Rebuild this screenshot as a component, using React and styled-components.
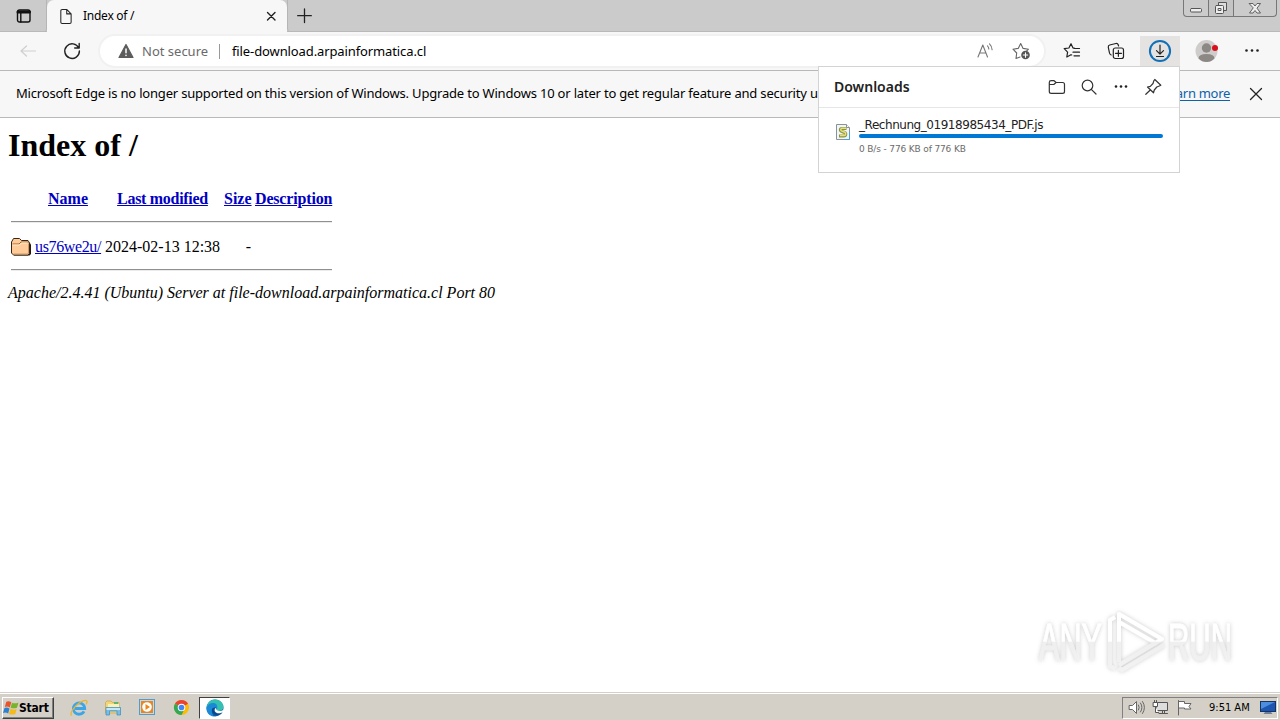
import React from "react";
import styled, { createGlobalStyle } from "styled-components";

const GlobalStyle = createGlobalStyle`
  * {
    box-sizing: border-box;
  }
  body {
    margin: 0;
    overflow: hidden;
    background: #fff;
  }
  svg {
    display: block;
    flex: none;
    overflow: visible;
  }
`;

const Desktop = styled.div`
  position: relative;
  display: flex;
  flex-direction: column;
  width: 1280px;
  height: 720px;
  background: #fff;
  color: #000;
  font-family: "Noto Sans", "Open Sans", sans-serif;
  font-size: 12px;
  white-space: nowrap;
`;

const TitleBar = styled.div`
  display: flex;
  height: 32px;
  background: #cbcbcb;
  box-shadow: inset 0 -1px 0 #b9b9b9;
`;

const TabActions = styled.div`
  display: flex;
  align-items: center;
  justify-content: center;
  width: 47px;
  padding-left: 2px;
  border-right: 1px solid #b5b5b5;
  border-bottom-right-radius: 4px;
`;

const Tab = styled.div`
  display: flex;
  align-items: center;
  width: 240px;
  height: 32px;
  padding: 0 9px 0 11px;
  background: #f7f7f7;
  border-radius: 7px 7px 0 0;
`;

const TabTitle = styled.span`
  flex: 1;
  margin-left: 10px;
  font-size: 12px;
  line-height: 16px;
  padding-bottom: 1px;
  letter-spacing: -0.25px;
`;

const NewTab = styled.div`
  display: flex;
  align-items: center;
  justify-content: center;
  width: 35px;
  border-left: 1px solid #b5b5b5;
  border-bottom-left-radius: 4px;
`;

const WindowButtons = styled.div`
  display: flex;
  width: 94px;
  height: 17px;
  margin-left: auto;
  margin-right: 3px;
  border: 1px solid #777;
  border-top: 0;
  border-radius: 0 0 4px 4px;
`;

const WindowButton = styled.div`
  display: flex;
  align-items: center;
  justify-content: center;
  width: ${(props) => props.$width}px;
  background: ${(props) => (props.$active ? "#c4c4c4" : "transparent")};
  & + & {
    border-left: 1px solid #777;
  }
`;

const Toolbar = styled.div`
  display: flex;
  align-items: center;
  gap: 4px;
  height: 39px;
  padding: 0 0 0 8px;
  background: #f7f7f7;
  border-bottom: 1px solid #b9b9b9;
`;

const ToolButton = styled.div`
  display: flex;
  flex: none;
  align-items: center;
  justify-content: center;
  width: 40px;
  height: 30px;
  margin-left: ${(props) => props.$gap || 0}px;
  background: ${(props) => (props.$active ? "#e5e3e1" : "transparent")};
`;

const AddressBar = styled.div`
  display: flex;
  flex: none;
  align-items: center;
  width: 944px;
  height: 30px;
  margin: 0 4px;
  padding: 0 14px 0 17px;
  background: #fff;
  border-radius: 15px;
  box-shadow: 0 0 0 2px #f1f1f1;
`;

const Security = styled.span`
  width: 78px;
  height: 15px;
  margin-left: 7px;
  border-right: 1px solid #999;
  color: #6a6a6a;
  font-size: 13px;
  line-height: 15px;
`;

const Url = styled.span`
  flex: 1;
  margin-left: 12px;
  font-size: 13px;
  letter-spacing: -0.11px;
`;

const AddressActions = styled.div`
  display: flex;
  gap: 18px;
`;

const InfoBar = styled.div`
  display: flex;
  align-items: center;
  height: 47px;
  padding: 0 17px 0 16px;
  background: #f7f7f7;
  border-bottom: 1px solid #b9b9b9;
  font-size: 13px;
  letter-spacing: -0.19px;
`;

const InfoText = styled.span`
  flex: 1;
  width: 0;
  padding-bottom: 2px;
  overflow: hidden;
`;

const InfoLink = styled.a`
  margin-right: 19px;
  padding-bottom: 2px;
  color: #0d62a8;
  text-decoration: underline;
  text-underline-offset: 2px;
  letter-spacing: -0.3px;
`;

const Page = styled.div`
  position: relative;
  flex: 1;
  padding: 8px;
  font-family: "Liberation Serif", "Times New Roman", serif;
  font-size: 16px;
  line-height: 18px;
`;

const Heading = styled.h1`
  margin: 0 0 19px;
  font-size: 32px;
  line-height: 39px;
`;

const Listing = styled.table`
  width: 327px;
  table-layout: fixed;
  border-spacing: 2px;
`;

const Row = styled.tr`
  height: 24px;
`;

const Head = styled.th`
  width: ${(props) => props.$width}px;
  padding: 2px 1px 1px;
  letter-spacing: ${(props) => props.$spacing || 0}px;
`;

const Cell = styled.td`
  padding: ${(props) => props.$top || 1}px 1px 1px;
  text-align: ${(props) => props.$align || "left"};
  letter-spacing: ${(props) => props.$spacing || 0}px;
`;

const Rule = styled.hr`
  margin: 8px 0;
  height: 2px;
  border: 0;
  border-top: 1px solid #8f8f8f;
  border-bottom: 1px solid #ececec;
`;

const Link = styled.a`
  color: #0000c4;
  text-decoration: underline;
`;

const Address = styled.address`
  margin-top: 2px;
`;

const Watermark = styled.div`
  position: absolute;
  right: 40px;
  bottom: 14px;
`;

const Popover = styled.div`
  position: absolute;
  top: 66px;
  left: 818px;
  width: 362px;
  height: 107px;
  background: #fff;
  border: 1px solid #d3d3d3;
  font-family: "DejaVu Sans", Tahoma, sans-serif;
`;

const PopoverHeader = styled.div`
  display: flex;
  align-items: center;
  gap: 14px;
  height: 41px;
  padding: 0 17px 0 15px;
  border-bottom: 1px solid #e6e6e6;
`;

const PopoverTitle = styled.span`
  flex: 1;
  padding-bottom: 2px;
  color: #222;
  font-family: "Noto Sans", sans-serif;
  font-size: 14px;
  font-weight: 600;
`;

const Download = styled.div`
  display: flex;
  gap: 8px;
  padding: 9px 16px 0;
`;

const FileIcon = styled.div`
  padding-top: 7px;
`;

const DownloadInfo = styled.div`
  flex: 1;
`;

const FileName = styled.div`
  height: 17px;
  color: #222;
  font-size: 12px;
  line-height: 17px;
  letter-spacing: -0.45px;
`;

const Progress = styled.div`
  height: 4px;
  background: #0078d4;
  border-radius: 2px;
`;

const DownloadStatus = styled.div`
  margin-top: 3px;
  color: #6b6b6b;
  font-size: 9px;
  line-height: 16px;
  letter-spacing: -0.14px;
`;

const Taskbar = styled.div`
  display: flex;
  align-items: center;
  height: 28px;
  padding: 2px 2px 0;
  background: #d4d0c8;
  border-top: 1px solid #d4d0c8;
  box-shadow: inset 0 1px 0 #fff;
  font-family: "DejaVu Sans Condensed", "DejaVu Sans", Tahoma, sans-serif;
`;

const StartButton = styled.div`
  display: flex;
  align-items: center;
  width: 52px;
  height: 22px;
  margin-right: 8px;
  border: 1px solid;
  border-color: #fff #404040 #404040 #fff;
  box-shadow: inset -1px -1px 0 #808080;
  font-size: 12px;
  font-weight: bold;
  letter-spacing: -0.2px;
`;

const Pinned = styled.div`
  display: flex;
  align-items: center;
  justify-content: center;
  width: ${(props) => (props.$active ? 31 : 34)}px;
  height: 22px;
  margin-left: ${(props) => (props.$active ? 1 : 0)}px;
  background: ${(props) => (props.$active ? "#fff" : "transparent")};
  border: ${(props) => (props.$active ? "1px solid" : "0")};
  border-color: #404040 #fff #fff #404040;
`;

const Tray = styled.div`
  display: flex;
  align-items: center;
  width: 156px;
  height: 22px;
  margin-left: auto;
  padding: 0 1px 0 5px;
  border: 1px solid;
  border-color: #808080 #fff #fff #808080;
`;

const TrayIcons = styled.div`
  display: flex;
  gap: 7px;
`;

const Clock = styled.span`
  flex: 1;
  padding-left: 16px;
  font-size: 11px;
`;

const Icon = ({ size = 18, box, color = "#222", width = 1.2, children }) => (
  <svg
    width={size}
    height={size}
    viewBox={box || `0 0 ${size} ${size}`}
    fill="none"
    stroke={color}
    strokeWidth={width}
    strokeLinejoin="round"
    strokeLinecap="round"
  >
    {children}
  </svg>
);

const Dots = ({ gap = 5 }) => (
  <Icon>
    <g fill="#222" stroke="none">
      <circle cx={9 - gap} cy="8.500" r="1.300" />
      <circle cx="9" cy="8.500" r="1.300" />
      <circle cx={9 + gap} cy="8.500" r="1.300" />
    </g>
  </Icon>
);

const FolderIcon = () => (
  <svg width="20" height="22" viewBox="0 -1.500 20 22">
    <path d="M2.500 19h16l1.500-1.500V8l-1.500-2z" fill="#221a12" />
    <path d="M.5 5.500 2.500 2h6l2 2h6.500L18.500 6.500V17L17 18.500H2.500L.5 16.500z" fill="#ffcc99" stroke="#3a2615" />
    <path d="M1.500 7.500h6.500l2-2h8" fill="none" stroke="#996633" />
    <path d="M2.500 17.500h14.500l.5-1V7" fill="none" stroke="#cc9966" />
    <path d="M1.500 8.500h7l2-2h6" fill="none" stroke="#ffe8cc" />
  </svg>
);

const AnyRunLogo = () => (
  <svg width="204" height="72" viewBox="0 0 204 72">
    <defs>
      <filter id="glow" x="-10%" y="-10%" width="120%" height="120%">
        <feDropShadow dx="0" dy="0" stdDeviation="1.9" floodColor="#777" floodOpacity="0.4" />
      </filter>
      <linearGradient id="fade" x1="0" y1="0" x2="0" y2="72" gradientUnits="userSpaceOnUse">
        <stop offset="0.49" stopColor="#fff" />
        <stop offset="0.5" stopColor="#efefef" />
        <stop offset="1" stopColor="#f3f3f3" />
      </linearGradient>
    </defs>
    <g filter="url(#glow)" fill="url(#fade)" fontFamily="Liberation Sans, sans-serif" fontSize="51">
      <g stroke="url(#fade)" strokeWidth="0.9">
        <text x="3" y="54" textLength="63" lengthAdjust="spacingAndGlyphs">ANY</text>
        <text x="132" y="54" textLength="64" lengthAdjust="spacingAndGlyphs">RUN</text>
      </g>
      <path
        d="M83 56V8l43 25-43 26M83 16l38 22M79 11l-5 3v46l5 3M83 62l3 2 42-25"
        fill="none"
        stroke="url(#fade)"
        strokeWidth="4"
        strokeLinejoin="round"
      />
    </g>
  </svg>
);

const EdgeIcon = () => (
  <svg width="18" height="18" viewBox="0 0 18 18">
    <circle cx="9" cy="9" r="8.500" fill="#0c59a4" />
    <path d="M.5 9C1 3.500 4.500.5 9 .5c5 0 8.500 3.500 8.500 7.500 0 3-3 4.500-6 4-1.500-.3-1-1-.5-2 .5-2-1-4-4-4S1.500 7.500.5 9z" fill="#35c1b1" />
    <path d="M.5 9C1.500 5 5 3.500 8 4c2.500.5 4 3 3 6-1-2-2.500-2-4-1-2 1.500-1.500 5 1 8.500C3 17 .3 13.500.5 9z" fill="#1b8ad6" />
    <path d="M8 9c-1.500 2 0 5 3 5.500 2 .4 4-.2 5.500-1.500l-1.500 2c-4 2-9 0-9-4 0-1.200 1-2 2-2z" fill="#0a4283" />
    <path d="M9.500 9c1.500.5.5 1.500 1.500 2.300 1.500 1.200 4.500 1 6.500-.8l-.6 2.300c-2.400 2-5.800 2-7.500.2-1-1.200-.9-3 .1-4z" fill="#fff" />
  </svg>
);

const ChromeIcon = () => (
  <svg width="17" height="17" viewBox="0 0 18 18">
    <circle cx="9" cy="9" r="8" fill="#fbbc05" />
    <path d="M9 9 2.070 5A8 8 0 0 1 15.930 5z" fill="#ea4335" />
    <path d="M9 9 2.070 5A8 8 0 0 0 9 17l3-6z" fill="#34a853" />
    <circle cx="9" cy="9" r="4" fill="#fff" />
    <circle cx="9" cy="9" r="3" fill="#4285f4" />
  </svg>
);

const ExplorerIcon = () => (
  <svg width="18" height="18" viewBox="0 0 18 18">
    <path d="M1.500 3.500 3 2h4l1.500 1.500H15V14H1.500z" fill="#f2d675" stroke="#c7a548" strokeWidth=".7" />
    <path d="M4 5h11v7H4z" fill="#fbf0b5" />
    <path d="M10 3h4v2h-4z" fill="#63b46b" />
    <path d="M2 8.500h14.500v7.500h-3.500v-4H5.500v4H2z" fill="#79bce6" stroke="#3b8cc0" strokeWidth=".7" />
    <path d="M2.500 9h13.500v2H2.500z" fill="#c6e7f6" />
  </svg>
);

const IeIcon = () => (
  <svg width="18" height="18" viewBox="0 0 18 18" fill="none">
    <path d="M14 12.300A5.700 5.700 0 1 1 14.700 9.500H5" stroke="#3ba5e8" strokeWidth="2.800" />
    <path d="M1.500 16.500c-2-2 2-8 7-12 4-3 8-4 8.500-2 .2.800-.3 2-1 3" stroke="#e9b530" strokeWidth="1.300" />
  </svg>
);

const PlayerIcon = () => (
  <svg width="17" height="17" viewBox="0 0 17 17">
    <rect x=".5" y=".5" width="15" height="15" fill="#b9ddf2" stroke="#559bc9" />
    <rect x="2" y="2" width="12" height="12" fill="#f08418" />
    <circle cx="8" cy="8" r="4.800" fill="#fff" />
    <path d="m6.500 5 4.500 3-4.500 3z" fill="#f08418" />
  </svg>
);

const WindowsFlag = () => (
  <svg width="16" height="16" viewBox="0 0 16 16">
    <path d="M3.300 1.800q2.500-1.300 5 .5L6.800 7.500q-2.500-1.700-5-.5z" fill="#e8542c" />
    <path d="M9 2.700q3 1.300 6.500-.3L14 7.700q-3.300 1.200-6.400 0z" fill="#76b52b" />
    <path d="M1.500 8q2.500-1 5 .5L5.200 13.500q-2.700-1.500-5.200-.5z" fill="#2d82d0" />
    <path d="M7.400 8.800q3.200 1.300 6.300.1L12.300 14q-3.300 1.200-6.300-.1z" fill="#f4b91b" />
  </svg>
);

const ScriptIcon = () => (
  <svg width="16" height="16" viewBox="0 0 16 16" fill="none">
    <path d="M1.500.5h10l3 3v12h-13z" fill="#f2f5f8" stroke="#8a9299" />
    <path d="M11.500.5v3h3" fill="#fff" stroke="#8a9299" />
    <path d="M14.500 8v7.500H9" stroke="#4d9fd6" />
    <path d="M11.500 4.500H7C4.800 4.500 4.800 7 7 7.500l2.500 1c2 .7 1.500 3.500-.5 3.500H4" stroke="#8a9440" strokeWidth="3" />
    <path d="M11 4.300H7C5 5 5.500 7 7.300 7.300l2.500 1c1.500.7 1 3-.5 3.200H5" stroke="#e5e07c" strokeWidth="1.500" />
  </svg>
);

const Tabs = () => (
  <TitleBar>
    <TabActions>
      <Icon size={16} width={1.4} color="#111">
        <rect x="1.500" y="2" width="12.500" height="12" rx="2" />
        <path d="M2 4h11.500" strokeWidth="3" />
        <path d="M4.800 5v9" />
      </Icon>
    </TabActions>
    <Tab>
      <Icon size={15} width={1.1} box="0 0 15 16">
        <path d="M3.900.6h5.100l4.500 4.500V14q0 1.400-1.400 1.400H3.900Q2.500 15.400 2.500 14V2Q2.500.6 3.900.6zM8.800.6v4.600h4.700" />
      </Icon>
      <TabTitle>Index of /</TabTitle>
      <Icon size={14} width={1.4}>
        <path d="m3.500 3.500 7.500 7.500M11 3.500 3.500 11" />
      </Icon>
    </Tab>
    <NewTab>
      <Icon size={16} width={1.3}>
        <path d="M7.500 1v13.500M.7 7.700h13.600" />
      </Icon>
    </NewTab>
    <WindowButtons>
      <WindowButton $width={24}>
        <Icon size={14} color="#555" width={1}>
          <rect x="1.500" y="7.500" width="11" height="3.500" rx="1" fill="#eee" />
        </Icon>
      </WindowButton>
      <WindowButton $width={25} $active>
        <Icon size={14} color="#555" width={1}>
          <path d="M4.500 4V1.500h8v8H10" fill="#ddd" />
          <rect x="1.500" y="4.500" width="8" height="8" rx="1" fill="#eee" />
          <rect x="4.500" y="7.500" width="2.500" height="2" />
        </Icon>
      </WindowButton>
      <WindowButton $width={43}>
        <Icon size={14} color="#555" width={0.9}>
          <path d="M1.500 2.500H5l2 2.500 2-2.500h3.500L9 7.200l3.500 4.800H9L7 9.500 5 12H1.500L5 7.200z" fill="#eee" />
        </Icon>
      </WindowButton>
    </WindowButtons>
  </TitleBar>
);

const NavBar = () => (
  <Toolbar>
    <ToolButton>
      <Icon color="#cfcfcf">
        <path d="M16.500 9H2M7.500 4 2 9l5.500 5" />
      </Icon>
    </ToolButton>
    <ToolButton>
      <Icon width={1.4}>
        <path d="M15.700 6A7.300 7.300 0 1 0 16.400 9M16.200 1.500V6h-4.500" />
      </Icon>
    </ToolButton>
    <AddressBar>
      <Icon size={18}>
        <path d="M9 2.500 16 15.500H2z" fill="#5c5c5c" stroke="#5c5c5c" />
        <path d="M9 7v3.800M9 13.200v.2" stroke="#fff" strokeWidth="1.500" />
      </Icon>
      <Security>Not secure</Security>
      <Url>file-download.arpainformatica.cl</Url>
      <AddressActions>
        <Icon color="#777" width={1.1}>
          <path d="M2 15 6.800 3l4.700 12M3.800 11h6M11.500 3.800q1.300 1.300 1.300 3.200M13.500 1.800q2.600 2.500 2.600 6" />
        </Icon>
        <Icon color="#666" width={1.1}>
          <path d="M8 15l-4 1.500.7-5.500L1 7.200l5.200-.8L8.700 1.500l2.400 4.900 5.400.8-2 2" />
          <circle cx="13.500" cy="13" r="4.300" fill="#555" stroke="none" />
          <path d="M13.500 10.800v4.400M11.300 13h4.400" stroke="#fff" />
        </Icon>
      </AddressActions>
    </AddressBar>
    <ToolButton>
      <Icon>
        <path d="M11.300 6.200 10 6 8 1.700 5.900 6l-4.700.7 3.400 3.400-.8 4.900 4.200-2.300.7.3M11 6.500h5.500M10 10.200h6.500M11 13.800h5.500" />
      </Icon>
    </ToolButton>
    <ToolButton>
      <Icon>
        <path d="M4.200 13Q2.800 12.500 2.500 11L1.300 5.300Q1 3.500 2.700 3l6.200-1.500q1.700-.3 2.300 1.300l.4 1.200" />
        <rect x="6.300" y="6" width="10.200" height="10.500" rx="2" />
        <path d="M11.400 8.300v6M8.500 11.300h6" />
      </Icon>
    </ToolButton>
    <ToolButton $active>
      <Icon size={24} width={1.2}>
        <circle cx="12" cy="12" r="10.100" stroke="#1170b8" strokeWidth="2" />
        <path d="M12 6v9M8.500 11.700 12 15.200l3.500-3.500M8.500 17.500h7" />
      </Icon>
    </ToolButton>
    <ToolButton $gap={3}>
      <Icon size={24}>
        <g stroke="none">
          <circle cx="11.500" cy="12" r="11" fill="#cfcdcb" />
          <circle cx="11.500" cy="9" r="4.700" fill="#8c8884" />
          <path d="M3.500 19.500q0-4.500 8-4.500t8 4.500Q16 23 11.500 23t-8-3.500z" fill="#8c8884" />
          <circle cx="20" cy="9" r="3" fill="#d90f1e" />
        </g>
      </Icon>
    </ToolButton>
    <ToolButton $gap={1}>
      <Dots gap={5.5} />
    </ToolButton>
  </Toolbar>
);

const DownloadsPopover = () => (
  <Popover>
    <PopoverHeader>
      <PopoverTitle>Downloads</PopoverTitle>
      <Icon color="#333">
        <path d="M1.300 4.500q0-1.800 1.800-1.800h3l2 1.800h6.500q1.900 0 1.900 1.900v7q0 1.900-1.900 1.900H3.200q-1.900 0-1.900-1.900zM1.300 6.500h4.500l2.300-2" />
      </Icon>
      <Icon color="#333">
        <circle cx="7.500" cy="7.500" r="5.300" />
        <path d="m11.300 11.300 4.700 4.700" />
      </Icon>
      <Dots />
      <Icon color="#333">
        <path d="m10.800 1.500 6 5.800-1.500.7-2.500 1-2.500 3-.8 2.800L3.500 9l2.800-.7L9 5.500l.8-2.600zM6.300 12l-4.500 4.300" />
      </Icon>
    </PopoverHeader>
    <Download>
      <FileIcon>
        <ScriptIcon />
      </FileIcon>
      <DownloadInfo>
        <FileName>_Rechnung_01918985434_PDF.js</FileName>
        <Progress />
        <DownloadStatus>0 B/s - 776 KB of 776 KB</DownloadStatus>
      </DownloadInfo>
    </Download>
  </Popover>
);

const IndexPage = () => (
  <Page>
    <Heading>Index of /</Heading>
    <Listing>
      <thead>
        <Row>
          <Head $width={22} />
          <Head $width={68}>
            <Link>Name</Link>
          </Head>
          <Head $width={117} $spacing={-0.3}>
            <Link>Last modified</Link>
          </Head>
          <Head $width={29}>
            <Link>Size</Link>
          </Head>
          <Head $width={79} $spacing={-0.17}>
            <Link>Description</Link>
          </Head>
        </Row>
      </thead>
      <tbody>
        <tr>
          <Cell colSpan={5}>
            <Rule />
          </Cell>
        </tr>
        <Row>
          <Cell>
            <FolderIcon />
          </Cell>
          <Cell $top={2} $spacing={-0.36}>
            <Link>us76we2u/</Link>
          </Cell>
          <Cell $top={2}>2024-02-13 12:38</Cell>
          <Cell $top={2} $align="right">
            -
          </Cell>
          <Cell />
        </Row>
        <tr>
          <Cell colSpan={5}>
            <Rule />
          </Cell>
        </tr>
      </tbody>
    </Listing>
    <Address>Apache/2.4.41 (Ubuntu) Server at file-download.arpainformatica.cl Port 80</Address>
    <Watermark>
      <AnyRunLogo />
    </Watermark>
  </Page>
);

const pinned = [IeIcon, ExplorerIcon, PlayerIcon, ChromeIcon];

const BottomBar = () => (
  <Taskbar>
    <StartButton>
      <WindowsFlag />
      Start
    </StartButton>
    {pinned.map((PinnedIcon, idx) => (
      <Pinned key={idx}>
        <PinnedIcon />
      </Pinned>
    ))}
    <Pinned $active>
      <EdgeIcon />
    </Pinned>
    <Tray>
      <TrayIcons>
        <Icon size={17} color="#666" width={1}>
          <path d="M1.500 6.500h3l4-4v12l-4-4h-3z" fill="#fff" />
          <path d="M10.500 6q1.500 2.500 0 5M12.500 4q3 4.500 0 9M14.500 2.500q4 6 0 12" />
        </Icon>
        <Icon size={17} color="#555" width={1}>
          <rect x="4.500" y="3.500" width="11" height="8" fill="#ddd" />
          <path d="M7 14.500h8.500M10.500 12v2M12.500 12v2" />
          <path d="M1.500 3.500h4v4h-4zM2.500 1.500v2M4.500 1.500v2M3.500 7.500v6h3" fill="#fff" />
        </Icon>
        <Icon size={17} color="#666" width={1}>
          <path d="M2.500 1.500v14.500M2.500 2.500h6v2h6.500l-2 3 2 2.500H8.500V9h-6" fill="#fff" />
        </Icon>
      </TrayIcons>
      <Clock>9:51 AM</Clock>
      <svg width="16" height="16" viewBox="0 0 16 16">
        <rect x=".5" y="1.500" width="15" height="10" fill="#1c56b0" stroke="#17335f" />
        <path d="M1 2h14L1 9z" fill="#4b8de0" />
        <path d="M5 12h6l1.500 2h-9z" fill="#6f7f96" />
      </svg>
    </Tray>
  </Taskbar>
);

const App = () => (
  <>
    <GlobalStyle />
    <Desktop>
      <Tabs />
      <NavBar />
      <InfoBar>
        <InfoText>
          Microsoft Edge is no longer supported on this version of Windows. Upgrade to Windows 10 or later to
          get regular feature and security updates from Microsoft Edge.
        </InfoText>
        <InfoLink>Learn more</InfoLink>
        <Icon size={14} width={1.3}>
          <path d="m1.500 1.500 11 11M12.500 1.500l-11 11" />
        </Icon>
      </InfoBar>
      <IndexPage />
      <BottomBar />
      <DownloadsPopover />
    </Desktop>
  </>
);

export default App;
